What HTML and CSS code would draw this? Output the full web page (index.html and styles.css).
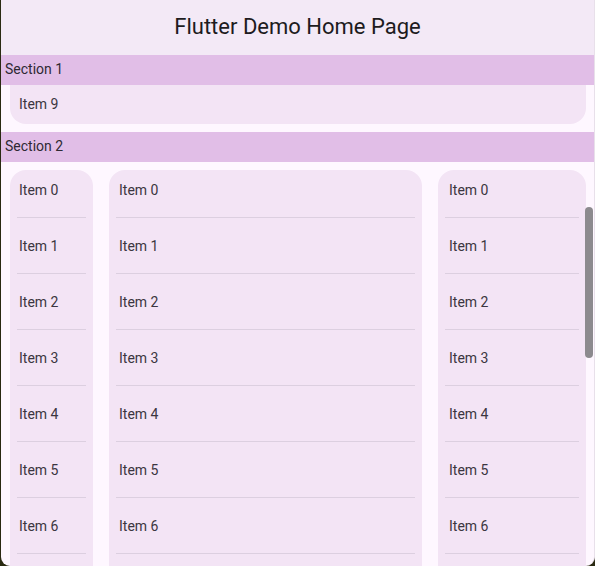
FILE: index.html
```html
<!DOCTYPE html>
<html lang="en">
<head>
    <meta charset="UTF-8">
    <meta name="viewport" content="width=device-width, initial-scale=1.0">
    <title>Flutter Demo Home Page</title>
    <link rel="stylesheet" href="styles.css">
</head>
<body>

    <div class="app">
        <!-- App bar -->
        <header class="app-bar">Flutter Demo Home Page</header>

        <div class="content">
            <!-- Section 1 -->
            <div class="section-header">Section 1</div>
            <div class="single-card">
                <div class="single-item">Item 9</div>
            </div>

            <!-- Section 2 -->
            <div class="section-header section-two">Section 2</div>
            <div class="columns">
                <div class="card narrow">
                    <div class="list">
                        <div class="item">Item 0</div>
                        <div class="item">Item 1</div>
                        <div class="item">Item 2</div>
                        <div class="item">Item 3</div>
                        <div class="item">Item 4</div>
                        <div class="item">Item 5</div>
                        <div class="item">Item 6</div>
                    </div>
                </div>
                <div class="card wide">
                    <div class="list">
                        <div class="item">Item 0</div>
                        <div class="item">Item 1</div>
                        <div class="item">Item 2</div>
                        <div class="item">Item 3</div>
                        <div class="item">Item 4</div>
                        <div class="item">Item 5</div>
                        <div class="item">Item 6</div>
                    </div>
                </div>
                <div class="card medium">
                    <div class="list">
                        <div class="item">Item 0</div>
                        <div class="item">Item 1</div>
                        <div class="item">Item 2</div>
                        <div class="item">Item 3</div>
                        <div class="item">Item 4</div>
                        <div class="item">Item 5</div>
                        <div class="item">Item 6</div>
                    </div>
                </div>
            </div>

            <!-- Scroll thumb -->
            <div class="scroll-thumb"></div>
        </div>
    </div>

</body>
</html>
```

FILE: styles.css
```css
html, body {
    margin: 0;
    height: 100%;
    background-color: #2a2a12;
    overflow: hidden;
}
body {
    font-family: Roboto, "Noto Sans", sans-serif;
    color: #1d1b20;
}
.app {
    margin-left: 1px;
    width: 593px;
    height: 566px;
    background-color: #fef7ff;
    border-right: 1px solid #e8e0ea;
    border-radius: 0 0 9px 9px;
    overflow: hidden;
    position: relative;
}
.app-bar {
    height: 55px;
    line-height: 53px;
    text-align: center;
    font-size: 22px;
    background-color: #f3e9f6;
}
.section-header {
    height: 30px;
    line-height: 29px;
    padding-left: 4px;
    font-size: 14px;
    color: #2e2933;
    background-color: #e1bee7;
}
.section-two {
    margin-top: 8px;
}
.single-card {
    margin: 0 8px 0 9px;
    height: 39px;
    background-color: #f3e4f5;
    border-radius: 0 0 16px 16px;
}
.single-item {
    padding-left: 9px;
    line-height: 39px;
    font-size: 14px;
    color: #3b3640;
}
.columns {
    display: flex;
    gap: 16px;
    padding: 8px 8px 0 9px;
}
.card {
    height: 420px;
    background-color: #f3e4f5;
    border-radius: 16px 16px 0 0;
    overflow: hidden;
    padding: 0 7px;
}
.narrow {
    width: 69px;
}
.wide {
    width: 299px;
}
.medium {
    width: 134px;
}
.list {
    margin-top: -8px;
}
.item {
    height: 55px;
    line-height: 56px;
    padding-left: 3px;
    font-size: 14px;
    color: #3b3640;
    border-bottom: 1px solid #dccfe0;
}
.narrow .item {
    padding-left: 2px;
}
.medium .item {
    padding-left: 4px;
}
.scroll-thumb {
    position: absolute;
    left: 584px;
    top: 207px;
    width: 8px;
    height: 151px;
    border-radius: 4px;
    background-color: #8c8a8e;
}
```
